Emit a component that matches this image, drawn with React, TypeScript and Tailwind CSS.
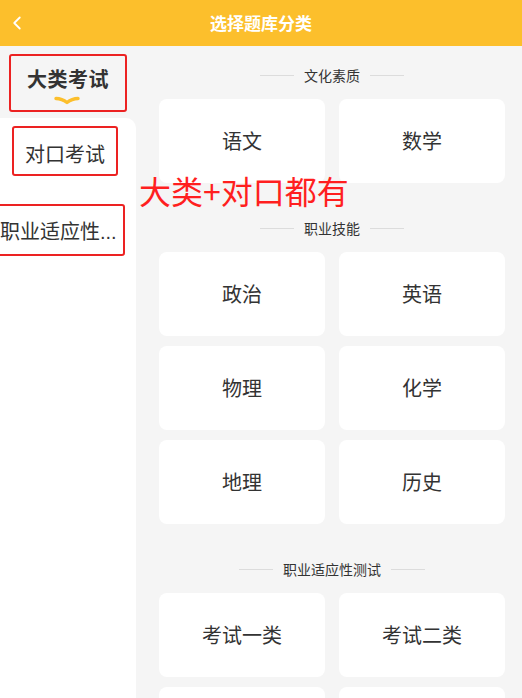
import { ChevronLeft } from "lucide-react";

const SECTIONS = [
  { title: "文化素质", items: ["语文", "数学"] },
  { title: "职业技能", items: ["政治", "英语", "物理", "化学", "地理", "历史"] },
  { title: "职业适应性测试", items: ["考试一类", "考试二类", "", " "] },
];

const FONT = { fontFamily: '"Noto Sans CJK SC", "Noto Sans", sans-serif' };

function SectionTitle({ text }: { text: string }) {
  return (
    <div className="flex items-center justify-center h-[20px] text-[14px] text-[#333]">
      <span className="w-[34px] h-px bg-[#dcdcdc]" />
      <span className="mx-[10px] leading-[20px]">{text}</span>
      <span className="w-[34px] h-px bg-[#dcdcdc]" />
    </div>
  );
}

export default function App() {
  return (
    <div
      className="relative w-[522px] h-[698px] overflow-hidden bg-[#f5f5f5] flex flex-col"
      style={FONT}
    >
      {/* Header */}
      <header className="relative h-[46px] shrink-0 bg-[#fcbf2c] flex items-center justify-center">
        <ChevronLeft className="absolute left-[6px] top-[12px] text-white" size={22} strokeWidth={2} />
        <h1 className="text-white text-[17px] font-bold">选择题库分类</h1>
      </header>

      <div className="flex flex-1 min-h-0">
        {/* Sidebar */}
        <aside className="w-[136px] shrink-0 flex flex-col">
          <div className="h-[72px] pt-[8px] pl-[9px]">
            <div className="w-[118px] h-[58px] border-2 border-[#ec2222] rounded-[3px] flex flex-col items-center pt-[10px]">
              <span className="text-[20px] font-bold text-[#333] leading-[26px] tracking-[0.5px]">大类考试</span>
              <svg width="26" height="9" viewBox="0 0 26 9" className="mt-[4px] -ml-[2px]">
                <path
                  d="M2 2.5 Q8 2.6 13 6.5 Q18 2.6 24 2.5"
                  fill="none"
                  stroke="#fcbf2c"
                  strokeWidth="3.4"
                  strokeLinecap="round"
                  strokeLinejoin="round"
                />
              </svg>
            </div>
          </div>
          <div className="flex-1 bg-white rounded-tr-[10px] flex flex-col pt-[8px]">
            <div className="ml-[12px] w-[106px] h-[50px] border-2 border-[#ec2222] rounded-[3px] flex items-center justify-center pt-[6px]">
              <span className="text-[20px] text-[#333] leading-[26px]">对口考试</span>
            </div>
            <div className="mt-[28px] -ml-[4px] w-[129px] h-[52px] border-2 border-[#ec2222] rounded-[3px] flex items-center pl-[2px] overflow-hidden pt-[2px]">
              <span className="text-[20px] text-[#333] leading-[26px] whitespace-nowrap">
                职业适应性
                <span style={{ fontFamily: '"Liberation Sans", sans-serif' }}>...</span>
              </span>
            </div>
          </div>
        </aside>

        {/* Content */}
        <main className="flex-1 pl-[23px] pr-[17px] pt-[19px]">
          {SECTIONS.map((s, i) => (
            <section key={s.title} className={i === 0 ? "" : "mt-[35px]"}>
              <SectionTitle text={s.title} />
              <div className="grid grid-cols-2 gap-x-[14px] gap-y-[10px] mt-[14px]">
                {s.items.map((it, j) => (
                  <div
                    key={j}
                    className="h-[84px] bg-white rounded-[8px] flex items-center justify-center text-[20px] text-[#333]"
                  >
                    {it}
                  </div>
                ))}
              </div>
            </section>
          ))}
        </main>
      </div>

      {/* annotation */}
      <div className="absolute left-[139px] top-[170px] text-[32px] leading-[40px] text-[#ff1f1f]">
        大类+对口都有
      </div>
    </div>
  );
}
